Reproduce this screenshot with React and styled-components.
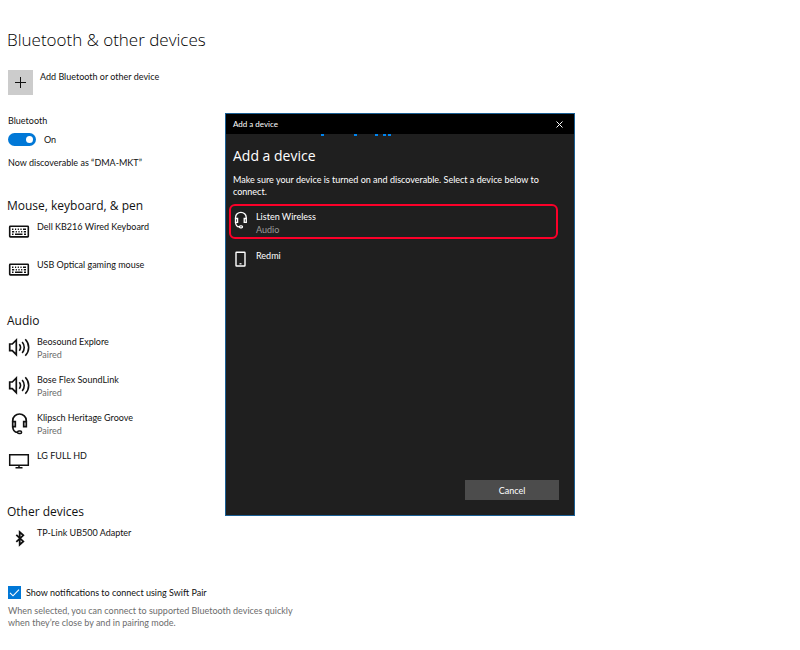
import { useState } from 'react'
import styled, { createGlobalStyle } from 'styled-components'

const GlobalStyle = createGlobalStyle`
  * {
    box-sizing: border-box;
  }

  body {
    margin: 0;
    background: #fff;
    color: #111;
    font-family: Lato, "Open Sans", sans-serif;
    font-size: 9px;
    line-height: 13px;
  }

  h1, h2 {
    font-family: "Open Sans", "Noto Sans", sans-serif;
  }

  button, input {
    font: inherit;
  }
`

const Page = styled.main`
  padding: 28px 8px;
`

const PageTitle = styled.h1`
  margin: 0 0 18px -1px;
  font-size: 17px;
  line-height: 24px;
  font-weight: 300;
  color: #000;
`

const AddButton = styled.button`
  display: flex;
  align-items: flex-start;
  gap: 7px;
  margin: 0 0 19px;
  padding: 0;
  border: 0;
  background: none;
  color: inherit;
  text-align: left;
  cursor: pointer;
`

const AddTile = styled.span`
  display: flex;
  align-items: center;
  justify-content: center;
  width: 25px;
  height: 25px;
  background: #ccc;
`

const SwitchLabel = styled.label`
  display: block;
`

const SwitchRow = styled.div`
  display: flex;
  align-items: center;
  gap: 8px;
  margin: 6px 0 10px;
`

const Switch = styled.input`
  appearance: none;
  display: flex;
  align-items: center;
  width: 28px;
  height: 13px;
  margin: 0;
  padding: 0 3px;
  border-radius: 7px;
  background: #999;
  cursor: pointer;

  &::before {
    content: "";
    width: 7px;
    height: 7px;
    border-radius: 50%;
    background: #fff;
  }

  &:checked {
    justify-content: flex-end;
    background: #0078d7;
  }
`

const Text = styled.p`
  margin: 0;
`

const Section = styled.section`
  margin-top: ${({ $first }) => ($first ? 27 : 15)}px;
`

const SectionTitle = styled.h2`
  margin: 0 0 4px -1px;
  font-size: 12px;
  line-height: 20px;
  font-weight: 400;
`

const DeviceList = styled.ul`
  margin: 0;
  padding: 0;
  list-style: none;
`

const Device = styled.li`
  display: flex;
  gap: 6px;
  height: 38px;
  margin-left: -1px;
`

const Status = styled.div`
  color: ${({ $dark }) => ($dark ? '#9b9b9b' : '#6c6c6c')};
`

const Icon = styled.svg`
  flex: none;
  width: ${({ $size }) => $size || 24}px;
  height: ${({ $size }) => $size || 24}px;
  fill: none;
  stroke: currentColor;
`

const CheckRow = styled.div`
  display: flex;
  align-items: center;
  gap: 5px;
  margin: 22px 0 6px;
`

const CheckBox = styled.span`
  display: grid;
  width: 13px;
  height: 13px;

  input, svg {
    grid-area: 1 / 1;
  }

  input {
    appearance: none;
    width: 13px;
    height: 13px;
    margin: 0;
    border: 1px solid #0078d7;
  }

  input:checked {
    background: #0078d7;
  }

  svg {
    color: #fff;
    pointer-events: none;
  }
`

const Hint = styled.p`
  max-width: 300px;
  margin: 0;
  color: #6c6c6c;
  line-height: 12px;
`

const Overlay = styled.div`
  position: fixed;
  inset: 0;
  display: flex;
  justify-content: center;
  align-items: flex-start;
  padding-top: 113px;
`

const Dialog = styled.div`
  display: flex;
  flex-direction: column;
  width: 350px;
  min-height: 403px;
  border: 1px solid #1a5f94;
  background: #1f1f1f;
  color: #fff;
`

const TitleBar = styled.div`
  display: flex;
  align-items: center;
  justify-content: space-between;
  height: 20px;
  padding: 0 7px;
  background: #000;
  font-size: 8px;
`

const CloseButton = styled.button`
  display: flex;
  padding: 3px;
  border: 0;
  background: none;
  color: #fff;
  cursor: pointer;
`

const Progress = styled.svg`
  display: block;
  width: 100%;
  height: 3px;
  fill: #0084ee;
`

const DialogBody = styled.div`
  display: flex;
  flex: 1;
  flex-direction: column;
  padding: 9px 15px 15px 7px;
`

const DialogTitle = styled.h2`
  margin: 0 0 8px;
  font-size: 14px;
  line-height: 20px;
  font-weight: 400;
`

const DialogText = styled.p`
  margin: 0;
  line-height: 12px;
`

const FoundList = styled.ul`
  display: flex;
  flex: 1;
  flex-direction: column;
  gap: 4px;
  margin: 6px 1px 0 -4px;
  padding: 0;
  list-style: none;
`

const Found = styled.button`
  display: flex;
  align-items: flex-start;
  gap: 6px;
  width: 100%;
  height: 35px;
  padding: 4px 0 0;
  border: 2px solid ${({ $selected }) => ($selected ? '#fb0029' : 'transparent')};
  border-radius: 6px;
  background: none;
  color: #fff;
  text-align: left;
  cursor: pointer;
`

const CancelButton = styled.button`
  align-self: flex-end;
  width: 94px;
  height: 20px;
  padding: 0;
  border: 0;
  background: #4c4c4c;
  color: #fff;
  cursor: pointer;
`

const KeyboardIcon = () => (
  <Icon viewBox="0 0 24 24" aria-hidden="true">
    <rect x="2.7" y="6.3" width="18.6" height="10.6" rx=".6" strokeWidth="1.6" />
    <path d="M5 9.2h1.4M8 9.2h1.2M10.7 9.2h1.2M13.4 9.2h1.2M16 9.2h3M5 11.7h2.2M8.7 11.7h1.2M11.4 11.7h1.2M14.1 11.7h1.2M16.8 11.7h2.2M5 14.3h1.5M8 14.3h7.5M17 14.3h2" strokeWidth="1.4" />
  </Icon>
)

const SpeakerIcon = () => (
  <Icon viewBox="0 0 24 24" aria-hidden="true">
    <path d="M2.7 9h2.6l4-4v14.6l-4-4H2.7z" strokeWidth="1.7" />
    <path d="M12.3 9.3c1.4 1.8 1.4 4.6 0 6.4M15.2 7c2.7 3.2 2.7 7.8 0 11M18.3 4.3c4.5 4.8 4.5 11.6 0 16.4" strokeWidth="1.6" />
  </Icon>
)

const HeadsetIcon = ({ size }) => (
  <Icon $size={size} viewBox="0 0 24 24" aria-hidden="true">
    <path d="M5.8 11V9.3a6.7 6.3 0 0 1 13.4 0V11M5.8 15.5c0 3.5 1.6 5.7 4.8 5.9" strokeWidth="1.7" />
    <path d="M5.7 10.7h2.6v5H5.7zM16.7 10.7h2.6v5h-2.6z" strokeWidth="1.7" />
    <rect x="10.6" y="20" width="4" height="2.6" rx="1.3" strokeWidth="1.5" />
  </Icon>
)

const MonitorIcon = () => (
  <Icon viewBox="0 0 24 24" aria-hidden="true">
    <path d="M2.7 5.7h18.6v10.6H2.7zM12 16.5v2.3M8.5 18.8h7" strokeWidth="1.5" />
  </Icon>
)

const BluetoothIcon = () => (
  <Icon viewBox="0 0 24 24" aria-hidden="true">
    <path d="M9.3 8.8l7 6.6-3.6 3.3V6l3.6 3.3-7 6.6" strokeWidth="1.8" />
  </Icon>
)

const PhoneIcon = () => (
  <Icon $size={19} viewBox="0 0 19 19" aria-hidden="true">
    <rect x="5" y="3.2" width="9" height="13.8" rx=".6" strokeWidth="1.4" />
    <path d="M8.5 14.8h2" strokeWidth="1.2" />
  </Icon>
)

const sections = [
  {
    title: 'Mouse, keyboard, & pen',
    devices: [
      { name: 'Dell KB216 Wired Keyboard', icon: KeyboardIcon },
      { name: 'USB Optical gaming mouse', icon: KeyboardIcon },
    ],
  },
  {
    title: 'Audio',
    devices: [
      { name: 'Beosound Explore', status: 'Paired', icon: SpeakerIcon },
      { name: 'Bose Flex SoundLink', status: 'Paired', icon: SpeakerIcon },
      { name: 'Klipsch Heritage Groove', status: 'Paired', icon: HeadsetIcon },
      { name: 'LG FULL HD', icon: MonitorIcon },
    ],
  },
  {
    title: 'Other devices',
    devices: [{ name: 'TP-Link UB500 Adapter', icon: BluetoothIcon }],
  },
]

const AddDeviceDialog = ({ onClose }) => {
  const [selected, setSelected] = useState('listen')

  return (
    <Overlay>
      <Dialog role="dialog" aria-labelledby="dialog-title">
        <TitleBar>
          <span>Add a device</span>
          <CloseButton aria-label="Close" onClick={onClose}>
            <Icon $size={9} viewBox="0 0 9 9">
              <path d="M1.5 1.5l6 6M7.5 1.5l-6 6" />
            </Icon>
          </CloseButton>
        </TitleBar>
        <Progress viewBox="0 0 348 3" aria-hidden="true">
          {[95, 128, 149, 157, 162].map((x) => (
            <rect key={x} x={x} y="0" width="3" height="2" />
          ))}
        </Progress>
        <DialogBody>
          <DialogTitle id="dialog-title">Add a device</DialogTitle>
          <DialogText>
            Make sure your device is turned on and discoverable. Select a device below to connect.
          </DialogText>
          <FoundList>
            <li>
              <Found $selected={selected === 'listen'} onClick={() => setSelected('listen')}>
                <HeadsetIcon size={19} />
                <div>
                  Listen Wireless
                  <Status $dark>Audio</Status>
                </div>
              </Found>
            </li>
            <li>
              <Found $selected={selected === 'redmi'} onClick={() => setSelected('redmi')}>
                <PhoneIcon />
                <div>Redmi</div>
              </Found>
            </li>
          </FoundList>
          <CancelButton onClick={onClose}>Cancel</CancelButton>
        </DialogBody>
      </Dialog>
    </Overlay>
  )
}

export default function App() {
  const [open, setOpen] = useState(true)
  const [on, setOn] = useState(true)
  const [notify, setNotify] = useState(true)

  return (
    <>
      <GlobalStyle />
      <Page>
        <PageTitle>Bluetooth & other devices</PageTitle>
        <AddButton onClick={() => setOpen(true)}>
          <AddTile>
            <Icon $size={11} viewBox="0 0 11 11" aria-hidden="true">
              <path d="M5.5 0v11M0 5.5h11" />
            </Icon>
          </AddTile>
          Add Bluetooth or other device
        </AddButton>

        <SwitchLabel htmlFor="bluetooth">Bluetooth</SwitchLabel>
        <SwitchRow>
          <Switch
            id="bluetooth"
            type="checkbox"
            role="switch"
            checked={on}
            onChange={(e) => setOn(e.target.checked)}
          />
          <span>{on ? 'On' : 'Off'}</span>
        </SwitchRow>
        <Text>Now discoverable as “DMA-MKT”</Text>

        {sections.map(({ title, devices }, i) => (
          <Section key={title} $first={i === 0}>
            <SectionTitle>{title}</SectionTitle>
            <DeviceList>
              {devices.map(({ name, status, icon: DeviceIcon }) => (
                <Device key={name}>
                  <DeviceIcon />
                  <div>
                    {name}
                    {status && <Status>{status}</Status>}
                  </div>
                </Device>
              ))}
            </DeviceList>
          </Section>
        ))}

        <CheckRow>
          <CheckBox>
            <input
              id="swift-pair"
              type="checkbox"
              checked={notify}
              onChange={(e) => setNotify(e.target.checked)}
            />
            <Icon $size={13} viewBox="0 0 13 13" aria-hidden="true">
              <path d="M2 6.8l3 3 6-6.2" strokeWidth="1.1" />
            </Icon>
          </CheckBox>
          <label htmlFor="swift-pair">Show notifications to connect using Swift Pair</label>
        </CheckRow>
        <Hint>
          When selected, you can connect to supported Bluetooth devices quickly when they’re close by and in pairing mode.
        </Hint>
      </Page>
      {open && <AddDeviceDialog onClose={() => setOpen(false)} />}
    </>
  )
}
